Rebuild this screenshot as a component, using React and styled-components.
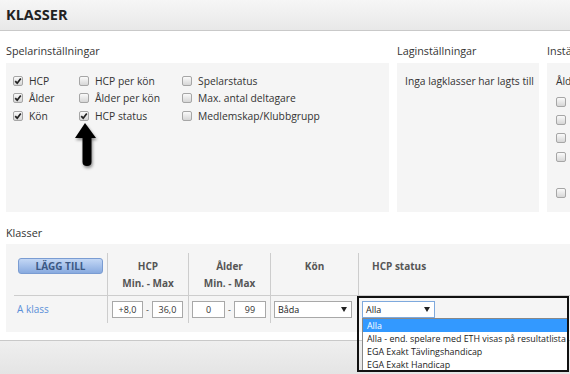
import React from 'react';
import styled, { createGlobalStyle } from 'styled-components';

const Global = createGlobalStyle`
  html, body { margin: 0; padding: 0; background: #fff; overflow: hidden; }
  body { font-family: "Open Sans", "DejaVu Sans", sans-serif; color: #333; }
`;

const Page = styled.div`
  width: 570px;
  height: 374px;
  overflow: hidden;
  display: flex;
  flex-direction: column;
`;

const TopBar = styled.header`
  height: 30px;
  flex: none;
  border-bottom: 1px solid #c9c9c9;
  background: linear-gradient(#f6f6f6, #e8e8e8);
  display: flex;
  align-items: center;
  padding-left: 6px;
`;

const PageTitle = styled.h1`
  margin: 0;
  font-size: 14.5px;
  line-height: 1;
  font-weight: 700;
  color: #222;
`;

const Main = styled.main`
  padding-left: 6px;
  flex: none;
`;

const SettingsRow = styled.div`
  display: flex;
  gap: 8px;
  width: 900px;
`;

const Section = styled.section`
  width: ${p => p.$w}px;
  flex: none;
`;

const SectionTitle = styled.h2`
  margin: 0;
  font-size: 10.8px;
  font-weight: 400;
  line-height: 14px;
  color: #333;
  padding: ${p => (p.$first ? '13px 0 5px' : '14px 0 4px')};
`;

const Panel = styled.div`
  position: relative;
  background: #f5f5f5;
  height: ${p => p.$h}px;
  box-sizing: border-box;
  padding: ${p => p.$pad};
`;

const CheckGrid = styled.div`
  display: grid;
  grid-template-columns: 66px 103px auto;
  grid-auto-flow: column;
  grid-template-rows: repeat(3, 17.5px);
`;

const CheckItem = styled.label`
  display: flex;
  align-items: center;
  gap: 6px;
  font-size: 10.3px;
  color: #333;
  white-space: nowrap;
`;

const Box = styled.span`
  width: 10px;
  height: 10px;
  box-sizing: border-box;
  border: 1px solid #a6a6a6;
  border-radius: 2px;
  background: linear-gradient(#fafafa, #d6d6d6);
  display: inline-flex;
  align-items: center;
  justify-content: center;
  flex: none;
  margin-top: ${p => p.$mt || 0}px;
`;

const Check = ({ checked, mt }) => (
  <Box $mt={mt}>
    {checked && (
      <svg width="8" height="8" viewBox="0 0 8 8">
        <path d="M1.2 4.2 L3.2 6.2 L6.8 1.6" fill="none" stroke="#222" strokeWidth="1.7" />
      </svg>
    )}
  </Box>
);

const PanelText = styled.div`
  font-size: 10.3px;
  line-height: 14px;
  color: #333;
  white-space: nowrap;
`;

const OptList = styled.div`
  display: flex;
  flex-direction: column;
  margin-top: 5px;
`;

const OptRow = styled.div`
  height: ${p => p.$h}px;
  display: flex;
  align-items: flex-start;
`;

const ArrowMark = styled.svg`
  position: absolute;
  left: 68px;
  top: 58px;
  filter: drop-shadow(1px 2px 1.5px rgba(0, 0, 0, 0.45));
`;

const ClassGrid = styled.div`
  display: grid;
  grid-template-columns: 93px 81px 82px 88px 240px;
  grid-template-rows: 43px 27px;
`;

const HeadCell = styled.div`
  box-sizing: border-box;
  border-bottom: 1px solid #cdcdcd;
  border-left: ${p => (p.$sep ? '1px solid #cdcdcd' : 'none')};
  padding: 5px 0 0 ${p => p.$pl || 0}px;
  text-align: ${p => p.$align || 'center'};
  font-size: 10px;
  font-weight: 700;
  line-height: 17px;
  color: #555;
`;

const DataCell = styled.div`
  position: relative;
  box-sizing: border-box;
  border-left: ${p => (p.$sep ? '1px solid #cdcdcd' : 'none')};
  padding: 5px 0 0 ${p => p.$pl || 0}px;
  display: flex;
  align-items: flex-start;
  gap: 3px;
`;

const AddButton = styled.button`
  display: block;
  margin: 0 auto;
  width: 85px;
  height: 16px;
  padding: 0;
  border: 1px solid #7a9cd2;
  border-radius: 3px;
  background: linear-gradient(#c3d7f5, #88aadf);
  font-family: "Open Sans", sans-serif;
  font-size: 10px;
  font-weight: 700;
  color: #3b5884;
  line-height: 14px;
`;

const ClassLink = styled.a`
  font-size: 10px;
  line-height: 17px;
  color: #5a8fd8;
  text-decoration: none;
  padding-left: 3px;
`;

const NumInput = styled.input`
  width: ${p => p.$w}px;
  height: 17px;
  box-sizing: border-box;
  border: 1px solid #a8a8a8;
  background: #fff;
  padding: 0;
  text-align: center;
  font-family: "Open Sans", sans-serif;
  font-size: 9px;
  color: #333;
  outline: none;
`;

const Dash = styled.span`
  font-size: 9px;
  line-height: 17px;
  color: #444;
`;

const SelectBox = styled.div`
  width: ${p => p.$w}px;
  height: 17px;
  box-sizing: border-box;
  border: 1px solid ${p => (p.$focus ? '#7ea9dd' : '#a8a8a8')};
  background: #fff;
  display: flex;
  align-items: center;
  justify-content: space-between;
  padding: 0 4px 0 3px;
  font-size: 9px;
  color: #222;
`;

const Caret = () => (
  <svg width="6" height="5" viewBox="0 0 6 5">
    <path d="M0 0 H6 L3 5 Z" fill="#222" />
  </svg>
);

const Highlight = styled.div`
  position: absolute;
  left: -2px;
  top: 0;
  width: 212px;
  height: 76px;
  box-sizing: border-box;
  border: 2px solid #111;
  pointer-events: none;
  z-index: 3;
`;

const DropList = styled.ul`
  position: absolute;
  left: 3px;
  top: 22px;
  width: 206px;
  margin: 0;
  padding: 0;
  list-style: none;
  background: #fff;
  border: 1px solid #888;
  box-sizing: border-box;
  z-index: 2;
`;

const DropItem = styled.li`
  height: 13px;
  line-height: 13px;
  padding-left: 4px;
  font-size: 8.9px;
  white-space: nowrap;
  overflow: hidden;
  color: ${p => (p.$active ? '#fff' : '#222')};
  background: ${p => (p.$active ? '#3399ff' : 'transparent')};
`;

const Footer = styled.footer`
  margin-top: 8px;
  flex: none;
  height: 34px;
  border-top: 1px solid #c9c9c9;
  background: linear-gradient(#efefef, #e4e4e4);
`;

const playerOpts = [
  ['HCP', true],
  ['Ålder', true],
  ['Kön', true],
  ['HCP per kön', false],
  ['Ålder per kön', false],
  ['HCP status', true],
  ['Spelarstatus', false],
  ['Max. antal deltagare', false],
  ['Medlemskap/Klubbgrupp', false],
];

export default function App() {
  return (
    <Page>
      <Global />
      <TopBar>
        <PageTitle>KLASSER</PageTitle>
      </TopBar>
      <Main>
        <SettingsRow>
          <Section $w={383}>
            <SectionTitle $first>Spelarinställningar</SectionTitle>
            <Panel $h={149} $pad="9px 0 0 7px">
              <CheckGrid>
                {playerOpts.map(([label, on]) => (
                  <CheckItem key={label}>
                    <Check checked={on} />
                    {label}
                  </CheckItem>
                ))}
              </CheckGrid>
              <ArrowMark width="28" height="50" viewBox="0 0 28 50">
                <path
                  d="M11 2 L22 17 L17.5 17 L17.5 41 Q17.5 45 13 45 Q8.5 45 8.5 41 L8.5 17 L1 17 Z"
                  fill="#000"
                />
              </ArrowMark>
            </Panel>
          </Section>
          <Section $w={142}>
            <SectionTitle $first>Laginställningar</SectionTitle>
            <Panel $h={149} $pad="11px 8px">
              <PanelText>Inga lagklasser har lagts till</PanelText>
            </Panel>
          </Section>
          <Section $w={200}>
            <SectionTitle $first>Inställningar</SectionTitle>
            <Panel $h={149} $pad="11px 9px">
              <PanelText>Åldersgrupper</PanelText>
              <OptList>
                <OptRow $h={18}><Check mt={4} /></OptRow>
                <OptRow $h={18}><Check mt={4} /></OptRow>
                <OptRow $h={19}><Check mt={4} /></OptRow>
                <OptRow $h={36}><Check mt={4} /></OptRow>
                <OptRow $h={18}><Check mt={4} /></OptRow>
              </OptList>
            </Panel>
          </Section>
        </SettingsRow>

        <SectionTitle>Klasser</SectionTitle>
        <Panel $h={88} $pad="9px 0 8px 8px">
          <ClassGrid>
            <HeadCell>
              <AddButton>LÄGG TILL</AddButton>
            </HeadCell>
            <HeadCell $sep>
              HCP
              <br />
              Min. - Max
            </HeadCell>
            <HeadCell $sep>
              Ålder
              <br />
              Min. - Max
            </HeadCell>
            <HeadCell $sep>Kön</HeadCell>
            <HeadCell $sep $align="left" $pl={13}>
              HCP status
            </HeadCell>

            <DataCell>
              <ClassLink href="#">A klass</ClassLink>
            </DataCell>
            <DataCell $sep $pl={4}>
              <NumInput $w={31} defaultValue="+8,0" readOnly />
              <Dash>-</Dash>
              <NumInput $w={31} defaultValue="36,0" readOnly />
            </DataCell>
            <DataCell $sep $pl={3}>
              <NumInput $w={33} defaultValue="0" readOnly />
              <Dash>-</Dash>
              <NumInput $w={32} defaultValue="99" readOnly />
            </DataCell>
            <DataCell $sep $pl={3}>
              <SelectBox $w={78}>
                Båda
                <Caret />
              </SelectBox>
            </DataCell>
            <DataCell $sep $pl={3}>
              <SelectBox $w={73} $focus>
                Alla
                <Caret />
              </SelectBox>
              <DropList>
                <DropItem $active>Alla</DropItem>
                <DropItem>Alla - end. spelare med ETH visas på resultatlista</DropItem>
                <DropItem>EGA Exakt Tävlingshandicap</DropItem>
                <DropItem>EGA Exakt Handicap</DropItem>
              </DropList>
              <Highlight />
            </DataCell>
          </ClassGrid>
        </Panel>
      </Main>
      <Footer />
    </Page>
  );
}
